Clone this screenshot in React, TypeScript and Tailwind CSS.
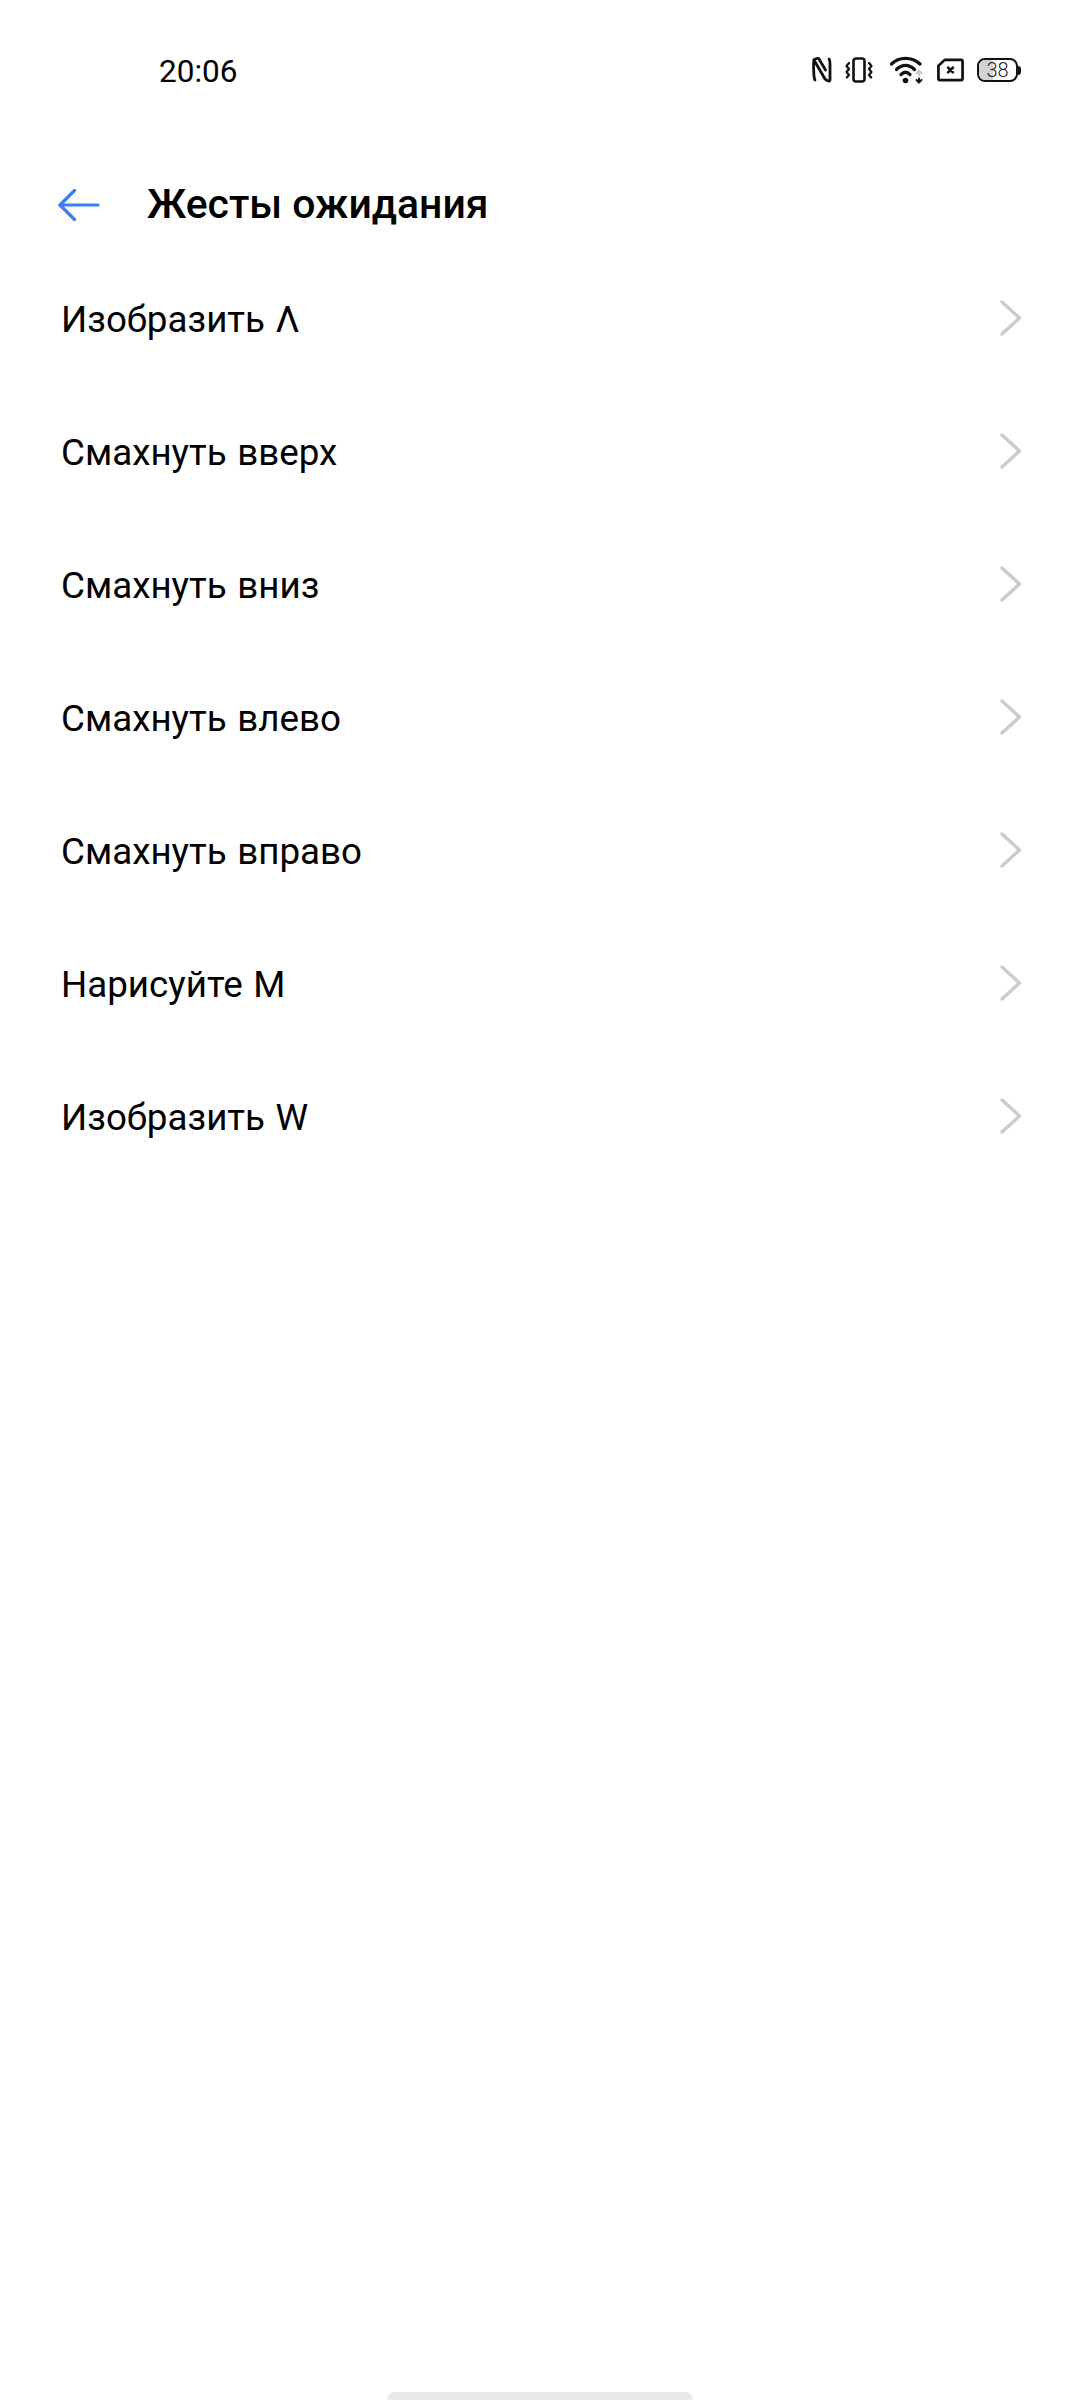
const rows = [
  'Изобразить Λ',
  'Смахнуть вверх',
  'Смахнуть вниз',
  'Смахнуть влево',
  'Смахнуть вправо',
  'Нарисуйте М',
  'Изобразить W',
];

const NfcIcon = () => (
  <svg width="20" height="26" viewBox="0 0 20 26" fill="none" stroke="#111" strokeWidth="2.8" strokeLinecap="round" strokeLinejoin="round">
    <path d="M3 23 C1.4 21 1.4 6 2 3 L13 22 C15 24 18 25 18 23 L18 8 C18 5 18 3 17 2" />
    <path d="M7 2 L13.5 13" />
    <path d="M2 3 C3 1.5 6 1 7 2" />
  </svg>
);

const VibrateIcon = () => (
  <svg width="28" height="26" viewBox="0 0 28 26" fill="none" stroke="#111" strokeLinecap="round" strokeLinejoin="round">
    <rect x="8.5" y="1.5" width="11" height="23" rx="2.5" strokeWidth="2.6" />
    <path d="M4 6 L1.5 9 L4 12 L1.5 15 L4 18 L1.8 20.5" strokeWidth="2.2" />
    <path d="M24 6 L26.5 9 L24 12 L26.5 15 L24 18 L26.2 20.5" strokeWidth="2.2" />
  </svg>
);

const WifiIcon = () => (
  <svg width="34" height="28" viewBox="0 0 34 28" fill="none" strokeLinecap="round" strokeLinejoin="round">
    <path d="M1.5 8 C9 0.5 22 0.5 30 8" stroke="#111" strokeWidth="3.2" />
    <path d="M6.5 13.5 C12 8 19 8 24.5 13.5" stroke="#111" strokeWidth="3.2" />
    <path d="M11 18.5 C14 15.5 17 15.5 20 18.5" stroke="#111" strokeWidth="3.2" />
    <circle cx="15.5" cy="24.5" r="2.8" fill="#111" />
    <path d="M26.5 17.5 L29 14.5 L31.5 17.5" stroke="#c9c9c9" strokeWidth="2" />
    <path d="M29 15 L29 19" stroke="#c9c9c9" strokeWidth="2" />
    <path d="M26.5 24 L29 26.5 L31.5 24" stroke="#111" strokeWidth="2" />
    <path d="M29 22.5 L29 26" stroke="#111" strokeWidth="2" />
  </svg>
);

const SimIcon = () => (
  <svg width="27" height="24" viewBox="0 0 28 24" fill="none" stroke="#111" strokeLinejoin="round" strokeLinecap="round">
    <path d="M8 1.5 L25 1.5 C26 1.5 26.5 2 26.5 3 L26.5 21 C26.5 22 26 22.5 25 22.5 L3 22.5 C2 22.5 1.5 22 1.5 21 L1.5 7.5 Z" strokeWidth="2.8" />
    <path d="M11.5 9.5 L16.5 14.5 M16.5 9.5 L11.5 14.5" strokeWidth="2.8" />
  </svg>
);

const BatteryIcon = () => (
  <div className="flex items-center">
    <div className="relative h-[24px] w-[41px] overflow-hidden rounded-[8px] border-[2.5px] border-[#111]">
      <div className="h-full w-[38%] bg-[#d2d2d2]" />
      <span className="absolute inset-0 flex items-center justify-center text-[20px] leading-none font-light text-[#222]">38</span>
    </div>
    <div className="h-[9px] w-[3px] rounded-r-sm bg-[#111]" />
  </div>
);

const Chevron = () => (
  <svg width="22" height="36" viewBox="0 0 22 36" fill="none" stroke="#cccccc" strokeWidth="3.4" strokeLinecap="round" strokeLinejoin="round">
    <path d="M2 2 L19.5 18 L2 34" />
  </svg>
);

export default function App() {
  return (
    <div className="flex h-[2400px] w-[1080px] flex-col bg-white font-['Roboto',sans-serif] text-black">
      {/* status bar */}
      <div className="flex h-[142px] items-center justify-between pr-[59px] pb-[2px] pl-[159px]">
        <span className="mt-[3px] text-[31.5px] leading-none">20:06</span>
        <div className="flex items-center">
          <NfcIcon />
          <div className="ml-[13px]"><VibrateIcon /></div>
          <div className="ml-[17px]"><WifiIcon /></div>
          <div className="ml-[13px]"><SimIcon /></div>
          <div className="ml-[13px]"><BatteryIcon /></div>
        </div>
      </div>

      {/* header */}
      <div className="mt-[7px] flex h-[112px] items-center pl-[58px]">
        <svg width="42" height="32" viewBox="0 0 42 32" fill="none" stroke="#3b7ff0" strokeWidth="3.2" strokeLinecap="round" strokeLinejoin="round">
          <path d="M40 16 L2 16" />
          <path d="M16.5 1.5 L2 16 L16.5 30.5" />
        </svg>
        <span className="mb-[1px] ml-[47px] text-[40.9px] leading-none font-medium">Жесты ожидания</span>
      </div>

      {/* rows */}
      <div className="mt-[15px] flex flex-col gap-[45px]">
        {rows.map((r) => (
          <div key={r} className="flex h-[88px] items-center justify-between pr-[58px] pl-[61px]">
            <span className="text-[36.75px] leading-none [word-spacing:1.5px]">{r}</span>
            <div className="mb-[4px]"><Chevron /></div>
          </div>
        ))}
      </div>

      {/* home bar */}
      <div className="mt-auto flex justify-center">
        <div className="h-[8px] w-[306px] rounded-t-full bg-[#e8e8e8]" />
      </div>
    </div>
  );
}
